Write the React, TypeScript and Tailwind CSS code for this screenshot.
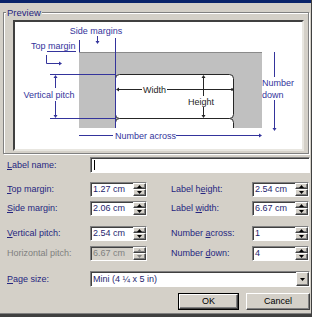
import React from 'react';

const raised =
  'border border-t-white border-l-white border-r-[#404040] border-b-[#404040] shadow-[inset_-1px_-1px_0_#808080] bg-[#d4d0c8]';
const sunken =
  'border border-t-[#808080] border-l-[#808080] border-r-white border-b-white shadow-[inset_1px_1px_0_#404040]';

const blue = '#34349c';
const ink = '#262626';

const Tri: React.FC<{ up?: boolean; dim?: boolean }> = ({ up, dim }) => (
  <svg width="5" height="3" viewBox="0 0 5 3">
    <path d={up ? 'M2.5 0L5 3H0Z' : 'M0 0H5L2.5 3Z'} fill={dim ? '#808080' : '#000'} />
  </svg>
);

const SpinField: React.FC<{ value: string; disabled?: boolean }> = ({ value, disabled }) => (
  <div
    className={`${sunken} w-[57px] h-[15px] flex ${disabled ? 'bg-[#d4d0c8] text-[#808080]' : 'bg-white text-[#1e1e6e]'}`}
  >
    <span className="flex-1 pl-[2px] leading-[13px]">{value}</span>
    <div className="flex flex-col w-[13px] h-[13px]">
      <div className={`${raised} h-[6px] flex items-center justify-center`}>
        <Tri up dim={disabled} />
      </div>
      <div className={`${raised} h-[7px] flex items-center justify-center`}>
        <Tri dim={disabled} />
      </div>
    </div>
  </div>
);

const Label: React.FC<{ before: string; key_: string; after: string; width: string; dim?: boolean }> = ({
  before,
  key_,
  after,
  width,
  dim,
}) => (
  <span className={`${width} ${dim ? 'text-[#808080]' : 'text-[#262680]'} whitespace-nowrap`}>
    {before}
    <span className={dim ? '' : 'underline underline-offset-1'}>{key_}</span>
    {after}
  </span>
);

const Preview: React.FC = () => (
  <svg
    width="287"
    height="127"
    viewBox="15 22 287 127"
    fontFamily="'Liberation Sans', Arial, sans-serif"
    fontSize="9"
  >
    <defs>
      <clipPath id="page">
        <rect x="79" y="52" width="183" height="76" />
      </clipPath>
    </defs>
    {/* page */}
    <rect x="79" y="52" width="183" height="76" fill="#c0c0c0" />
    <line x1="79" y1="52.5" x2="262" y2="52.5" stroke="#8a8a8a" />
    <g clipPath="url(#page)">
      <rect x="115.5" y="74.5" width="118" height="44" rx="4" fill="#fff" stroke={ink} />
      <rect x="115.5" y="118.5" width="118" height="44" rx="4" fill="#fff" stroke={ink} />
    </g>

    {/* side margins */}
    <text x="96" y="34" textAnchor="middle" fill={blue}>Side margins</text>
    <line x1="97.5" y1="36" x2="97.5" y2="41" stroke={blue} />
    <path d="M95.5 41H99.5L97.5 44Z" fill={blue} />
    <line x1="115.5" y1="38" x2="115.5" y2="128" stroke={blue} />
    <line x1="79.5" y1="40" x2="79.5" y2="52" stroke={blue} />

    {/* top margin */}
    <text x="31" y="49" fill={blue}>Top margin</text>
    <line x1="47" y1="51.5" x2="76" y2="51.5" stroke={blue} />
    <path d="M46.5 55V63.5H59" stroke={blue} fill="none" />
    <path d="M59 61.5V65.5L62 63.5Z" fill={blue} />

    {/* vertical pitch */}
    <line x1="50" y1="74.5" x2="115" y2="74.5" stroke={blue} />
    <line x1="50" y1="118.5" x2="115" y2="118.5" stroke={blue} />
    <path d="M53.5 78H57.5L55.5 75Z" fill={blue} />
    <path d="M53.5 115H57.5L55.5 118Z" fill={blue} />
    <line x1="55.5" y1="77" x2="55.5" y2="88" stroke={blue} />
    <line x1="55.5" y1="101" x2="55.5" y2="116" stroke={blue} />
    <text x="49" y="98" textAnchor="middle" fill={blue}>Vertical pitch</text>

    {/* width */}
    <path d="M116 89.5L119 87.5V91.5Z" fill={ink} />
    <line x1="118" y1="89.5" x2="142" y2="89.5" stroke={ink} />
    <line x1="167" y1="89.5" x2="232" y2="89.5" stroke={ink} />
    <circle cx="232" cy="89.5" r="1.3" fill={ink} />
    <text x="154.5" y="92.5" textAnchor="middle" fill={ink}>Width</text>

    {/* height */}
    <path d="M201.5 78H205.5L203.5 75Z" fill={ink} />
    <path d="M201.5 115H205.5L203.5 118Z" fill={ink} />
    <line x1="203.5" y1="77" x2="203.5" y2="96" stroke={ink} />
    <line x1="203.5" y1="107" x2="203.5" y2="116" stroke={ink} />
    <text x="201" y="105" textAnchor="middle" fill={ink}>Height</text>

    {/* number down */}
    <line x1="274.5" y1="52" x2="274.5" y2="77" stroke={blue} />
    <line x1="274.5" y1="100" x2="274.5" y2="128" stroke={blue} />
    <path d="M272.5 128H276.5L274.5 131Z" fill={blue} />
    <text x="262" y="86" fill={blue}>Number</text>
    <text x="262" y="98" fill={blue}>down</text>

    {/* number across */}
    <line x1="79" y1="135.5" x2="113" y2="135.5" stroke={blue} />
    <line x1="176" y1="135.5" x2="259" y2="135.5" stroke={blue} />
    <path d="M259 133.5V137.5L262 135.5Z" fill={blue} />
    <text x="115" y="138.5" fill={blue}>Number across</text>
  </svg>
);

const App: React.FC = () => {
  return (
    <div
      className="w-[312px] h-[317px] bg-[#d4d0c8] flex flex-col overflow-hidden border-r border-r-[#404040] text-[9px] leading-[11px]"
      style={{ fontFamily: "'Liberation Sans', Arial, sans-serif" }}
    >
      <div className="h-[3px] bg-[#0a246a]" />

      {/* Preview group */}
      <div className="mt-[9px] ml-[3px] w-[306px] border border-[#808080] shadow-[inset_1px_1px_0_white,1px_1px_0_white] flex flex-col">
        <span className="-mt-[6px] ml-[2px] px-[1px] w-fit bg-[#d4d0c8] text-[#262680] text-[9.5px]">Preview</span>
        <div className="mt-[2px] mb-[2px] ml-[9px] w-[291px] h-[131px] bg-white border-2 border-t-[#404040] border-l-[#404040] border-r-[#e8e6e0] border-b-[#e8e6e0]">
          <Preview />
        </div>
      </div>

      {/* Label name */}
      <div className="mt-[3px] pl-[7px] h-[16px] flex items-center">
        <Label before="" key_="L" after="abel name:" width="w-[83px]" />
        <div className={`${sunken} w-[220px] h-[16px] bg-white flex items-center pl-[3px]`}>
          <span className="w-px h-[10px] bg-black" />
        </div>
      </div>

      <div className="mt-[9px] pl-[7px] h-[15px] flex items-center">
        <Label before="" key_="T" after="op margin:" width="w-[83px]" />
        <SpinField value="1.27 cm" />
        <span className="w-[24px]" />
        <Label before="Label h" key_="e" after="ight:" width="w-[81px]" />
        <SpinField value="2.54 cm" />
      </div>

      <div className="mt-[4px] pl-[7px] h-[15px] flex items-center">
        <Label before="" key_="S" after="ide margin:" width="w-[83px]" />
        <SpinField value="2.06 cm" />
        <span className="w-[24px]" />
        <Label before="Label " key_="w" after="idth:" width="w-[81px]" />
        <SpinField value="6.67 cm" />
      </div>

      <div className="mt-[10px] pl-[7px] h-[15px] flex items-center">
        <Label before="" key_="V" after="ertical pitch:" width="w-[83px]" />
        <SpinField value="2.54 cm" />
        <span className="w-[24px]" />
        <Label before="Number " key_="a" after="cross:" width="w-[81px]" />
        <SpinField value="1" />
      </div>

      <div className="mt-[5px] pl-[7px] h-[15px] flex items-center">
        <Label before="Horizontal pitch:" key_="" after="" width="w-[83px]" dim />
        <SpinField value="6.67 cm" disabled />
        <span className="w-[24px]" />
        <Label before="Number " key_="d" after="own:" width="w-[81px]" />
        <SpinField value="4" />
      </div>

      {/* Page size */}
      <div className="mt-[10px] pl-[7px] h-[16px] flex items-center">
        <Label before="" key_="P" after="age size:" width="w-[83px]" />
        <div className={`${sunken} w-[220px] h-[16px] bg-white flex items-center`}>
          <span className="flex-1 pl-[2px] text-[#1e1e6e]">Mini (4 ¼ x 5 in)</span>
          <div className={`${raised} w-[13px] h-[14px] flex items-center justify-center`}>
            <Tri />
          </div>
        </div>
      </div>

      {/* Buttons */}
      <div className="mt-[6px] flex justify-end gap-[7px] pr-[1px]">
        <div className="w-[61px] h-[17px] border border-black flex">
          <div className={`${raised} flex-1 flex items-center justify-center text-black`}>OK</div>
        </div>
        <div className={`${raised} w-[64px] h-[17px] flex items-center justify-center text-black`}>Cancel</div>
      </div>

      <div className="mt-auto h-[4px] bg-[#404040] border-t border-t-[#808080]" />
    </div>
  );
};

export default App;
